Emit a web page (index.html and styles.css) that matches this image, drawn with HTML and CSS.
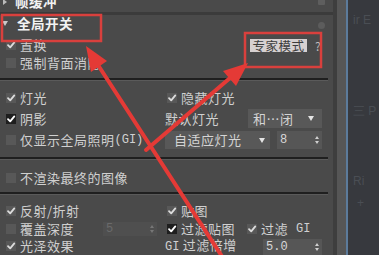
FILE: index.html
```html
<!DOCTYPE html>
<html>
<head>
<meta charset="utf-8">
<link rel="stylesheet" href="styles.css">
</head>
<body>
<div class="app">
  <div class="panel">
    <div class="roll-top">
      <span class="tri-right"></span><span class="roll-title">帧缓冲</span><span class="pin-sq"></span>
    </div>
    <div class="roll-sep"></div>
    <div class="roll-head">
      <span class="tri-down"></span><span class="roll-title">全局开关</span><span class="pin-dot"></span>
    </div>

    <div class="group g1">
      <div class="row r18 split">
        <div class="cb"><span class="box light"><svg viewBox="0 0 10 10"><path d="M2 5.2 L4.2 7.4 L8.3 2.4"/></svg></span>置换</div>
        <div class="expert"><span class="expert-label">专家模式</span><span class="help">?</span></div>
      </div>
      <div class="row r18"><div class="cb"><span class="box"></span>强制背面消隐</div></div>
    </div>
    <div class="sep"></div>

    <div class="group g2">
      <div class="row r20 cols">
        <div class="cb"><span class="box light"><svg viewBox="0 0 10 10"><path d="M2 5.2 L4.2 7.4 L8.3 2.4"/></svg></span>灯光</div>
        <div class="cb c2"><span class="box light"><svg viewBox="0 0 10 10"><path d="M2 5.2 L4.2 7.4 L8.3 2.4"/></svg></span>隐藏灯光</div>
      </div>
      <div class="row r21 cols">
        <div class="cb"><span class="box dark"><svg viewBox="0 0 10 10"><path d="M2 5.2 L4.2 7.4 L8.3 2.4"/></svg></span>阴影</div>
        <div class="c2line">
          <span>默认灯光</span>
          <div class="dd dd-small"><span>和…闭</span><span class="dd-arrow"></span></div>
        </div>
      </div>
      <div class="row r22 cols">
        <div class="cb"><span class="box"></span>仅显示全局照明<span class="mono">(GI)</span></div>
        <div class="c2line">
          <div class="dd dd-wide"><span>自适应灯光</span><span class="dd-arrow"></span></div>
          <div class="spin spin-8"><span class="mono">8</span><span class="spin-arrows"><i class="up"></i><i class="down"></i></span></div>
        </div>
      </div>
    </div>
    <div class="sep"></div>

    <div class="group g3">
      <div class="row r18"><div class="cb"><span class="box"></span>不渲染最终的图像</div></div>
    </div>
    <div class="sep"></div>

    <div class="group g4">
      <div class="row r18 cols">
        <div class="cb"><span class="box light"><svg viewBox="0 0 10 10"><path d="M2 5.2 L4.2 7.4 L8.3 2.4"/></svg></span>反射/折射</div>
        <div class="cb c2"><span class="box light"><svg viewBox="0 0 10 10"><path d="M2 5.2 L4.2 7.4 L8.3 2.4"/></svg></span>贴图</div>
      </div>
      <div class="row r17 cols">
        <div class="c1line">
          <div class="cb"><span class="box"></span>覆盖深度</div>
          <div class="spin spin-5 disabled"><span class="mono">5</span><span class="spin-arrows"><i class="up"></i><i class="down"></i></span></div>
        </div>
        <div class="c2line start">
          <div class="cb c2 first"><span class="box dark"><svg viewBox="0 0 10 10"><path d="M2 5.2 L4.2 7.4 L8.3 2.4"/></svg></span>过滤贴图</div>
          <div class="cb c2"><span class="box light"><svg viewBox="0 0 10 10"><path d="M2 5.2 L4.2 7.4 L8.3 2.4"/></svg></span>过滤<span class="mono gi">GI</span></div>
        </div>
      </div>
      <div class="row r18 cols">
        <div class="cb"><span class="box light"><svg viewBox="0 0 10 10"><path d="M2 5.2 L4.2 7.4 L8.3 2.4"/></svg></span>光泽效果</div>
        <div class="c2line">
          <span><span class="mono">GI</span> 过滤倍增</span>
          <div class="spin spin-50"><span class="mono">5.0</span><span class="spin-arrows"><i class="up"></i><i class="down"></i></span></div>
        </div>
      </div>
    </div>
  </div>
  <div class="edge"></div>
  <div class="track"></div>
  <div class="blue"></div>
  <div class="darkside">
    <div class="ghost g-a">ir E</div>
    <div class="ghost g-b">三 P</div>
    <div class="ghost g-c">Ri</div>
    <div class="ghost g-d">+</div>
  </div>

  <svg class="annot" width="379" height="255" viewBox="0 0 379 255">
    <rect x="2" y="15" width="99" height="26" class="rbox"/>
    <rect x="245" y="33" width="76" height="34" class="rbox"/>
    <line x1="98" y1="65" x2="223" y2="258" class="rline"/>
    <polygon points="86,46 107,61 91,72" class="rhead"/>
    <line x1="146" y1="150" x2="230" y2="78" class="rline"/>
    <polygon points="248,63 236,86 223,71" class="rhead"/>
  </svg>
</div>
</body>
</html>
```

FILE: styles.css
```css
html, body {
  margin: 0;
  padding: 0;
  background: #37393d;
}

.app {
  position: relative;
  display: flex;
  width: 379px;
  height: 255px;
  overflow: hidden;
  font-family: "Noto Sans CJK SC", "Noto Sans", sans-serif;
}

.panel {
  width: 333px;
  flex: none;
  background: #4a4a4a;
  color: #d0d0d0;
  font-size: 13px;
  letter-spacing: 0.5px;
  display: flex;
  flex-direction: column;
}

.mono {
  font-family: "Liberation Mono", "DejaVu Sans Mono", monospace;
  font-size: 12px;
  letter-spacing: 0;
}

/* rollout headers */
.roll-top {
  position: relative;
  height: 13px;
  box-sizing: border-box;
  padding: 0 0 4px 3px;
  display: flex;
  align-items: flex-end;
  overflow: hidden;
}
.roll-top .roll-title {
  line-height: 13px;
  margin-left: 8px;
}
.tri-right {
  width: 0;
  height: 0;
  border-top: 3px solid transparent;
  border-bottom: 3px solid transparent;
  border-left: 4px solid #bbbbbb;
  align-self: flex-start;
  margin-top: -1px;
}
.roll-sep {
  height: 3px;
  background: #3b3b3b;
}
.roll-head {
  position: relative;
  height: 20px;
  display: flex;
  align-items: center;
  padding-left: 2px;
}
.tri-down {
  width: 0;
  height: 0;
  border-left: 3px solid transparent;
  border-right: 3px solid transparent;
  border-top: 5px solid #c8c8c8;
}
.roll-title {
  font-weight: bold;
  color: #f2f2f2;
  font-size: 13.5px;
  line-height: 14px;
  margin-left: 9px;
}
.pin-sq {
  position: absolute;
  right: 8px;
  top: -1px;
  width: 7px;
  height: 6px;
  border-radius: 1px;
  background: #5e5e5e;
}
.pin-dot {
  position: absolute;
  right: 8px;
  top: 7px;
  width: 7px;
  height: 7px;
  border-radius: 50%;
  background: #5c5c5c;
}

/* groups */
.group {
  display: flex;
  flex-direction: column;
  padding-right: 11px;
}
.g1 { padding-top: 4px; padding-bottom: 6px; }
.g2 { padding-top: 7px; padding-bottom: 6px; }
.g3 { padding-top: 9px; padding-bottom: 5px; }
.g4 { padding-top: 7px; }

.sep {
  height: 3px;
  margin-right: 5px;
  box-sizing: border-box;
  border-top: 2px solid #1f1f1f;
  background: #5a5a5a;
}

.row {
  display: flex;
  align-items: center;
}
.r17 { height: 17px; }
.r18 { height: 18px; }
.r20 { height: 20px; }
.r21 { height: 21px; }
.r22 { height: 22px; }

.split { justify-content: space-between; }

.cols {
  display: grid;
  grid-template-columns: 165px 1fr;
  align-items: center;
}

.cb {
  display: flex;
  align-items: center;
  white-space: nowrap;
  line-height: 14px;
}
.box {
  width: 10px;
  height: 10px;
  flex: none;
  margin: 0 4px 0 6px;
  background: #585858;
  display: flex;
}
.box svg {
  width: 10px;
  height: 10px;
}
.box svg path {
  fill: none;
  stroke-width: 1.8;
  stroke-linecap: round;
  stroke-linejoin: round;
}
.box.light svg path { stroke: #dcdcdc; }
.box.dark { background: #1e1e1e; }
.box.dark svg path { stroke: #ffffff; }
.cb.c2 .box { margin-left: 2px; }

.c1line {
  display: flex;
  align-items: center;
  justify-content: space-between;
  padding-right: 8px;
}
.c2line {
  display: flex;
  align-items: center;
  justify-content: space-between;
  line-height: 14px;
  white-space: nowrap;
}
.c2line.start { justify-content: flex-start; }
.cb.first { width: 80px; flex: none; }
.mono.gi { margin-left: 8px; }

/* expert mode */
.expert {
  display: flex;
  align-items: center;
}
.expert-label {
  background: #d6d0d0;
  color: #3c3c3c;
  font-size: 12.5px;
  line-height: 13px;
  height: 13px;
  width: 57px;
  text-align: center;
  letter-spacing: 0.5px;
}
.help {
  margin-left: 8px;
  width: 7px;
  color: #bdbdbd;
  font-size: 12px;
  line-height: 13px;
}

/* dropdowns */
.dd {
  display: flex;
  align-items: center;
  justify-content: space-between;
  background: #585858;
  box-sizing: border-box;
  color: #d4d4d4;
}
.dd-small {
  width: 74px;
  height: 19px;
  padding: 0 8px 0 5px;
}
.dd-wide {
  width: 105px;
  height: 18px;
  padding: 0 5px 0 9px;
}
.dd-arrow {
  width: 0;
  height: 0;
  border-left: 3.5px solid transparent;
  border-right: 3.5px solid transparent;
  border-top: 5px solid #e4e4e4;
}

/* spinners */
.spin {
  display: flex;
  align-items: center;
  justify-content: space-between;
  background: #565656;
  box-sizing: border-box;
  padding: 0 2px 0 3px;
  color: #d8d8d8;
}
.spin-8 { width: 45px; height: 18px; }
.spin-5 { width: 54px; height: 14px; }
.spin-50 { width: 59px; height: 16px; align-self: flex-start; margin-top: 2px; }
.spin.disabled { background: #4f4f4f; color: #6a6a6a; }
.spin-arrows {
  display: flex;
  flex-direction: column;
  gap: 2px;
  padding-right: 1px;
}
.spin-arrows i {
  display: block;
  width: 0;
  height: 0;
  border-left: 2.5px solid transparent;
  border-right: 2.5px solid transparent;
}
.spin-arrows .up { border-bottom: 3px solid #cfcfcf; }
.spin-arrows .down { border-top: 3px solid #cfcfcf; }
.spin.disabled .spin-arrows .up { border-bottom-color: #777; }
.spin.disabled .spin-arrows .down { border-top-color: #777; }

/* right side */
.edge { width: 4px; flex: none; background: #3e3e3e; }
.track { width: 9px; flex: none; background: #565656; }
.blue { width: 2px; flex: none; background: #5c7b9b; }
.darkside {
  flex: 1;
  background: #37393e;
  display: flex;
  flex-direction: column;
  padding-left: 5px;
  font-family: "Liberation Sans", sans-serif;
  color: #4a4e54;
  font-size: 12px;
}
.ghost { line-height: 14px; height: 14px; }
.g-a { margin-top: 13px; }
.g-b { margin-top: 77px; }
.g-c { margin-top: 56px; }
.g-d { margin-top: 8px; padding-left: 4px; }

/* annotations */
.annot {
  position: absolute;
  left: 0;
  top: 0;
  pointer-events: none;
}
.rbox {
  fill: none;
  stroke: #d9403d;
  stroke-width: 2.5;
}
.rline {
  stroke: #e43a36;
  stroke-width: 4;
  stroke-linecap: round;
}
.rhead {
  fill: #e43a36;
}
```
